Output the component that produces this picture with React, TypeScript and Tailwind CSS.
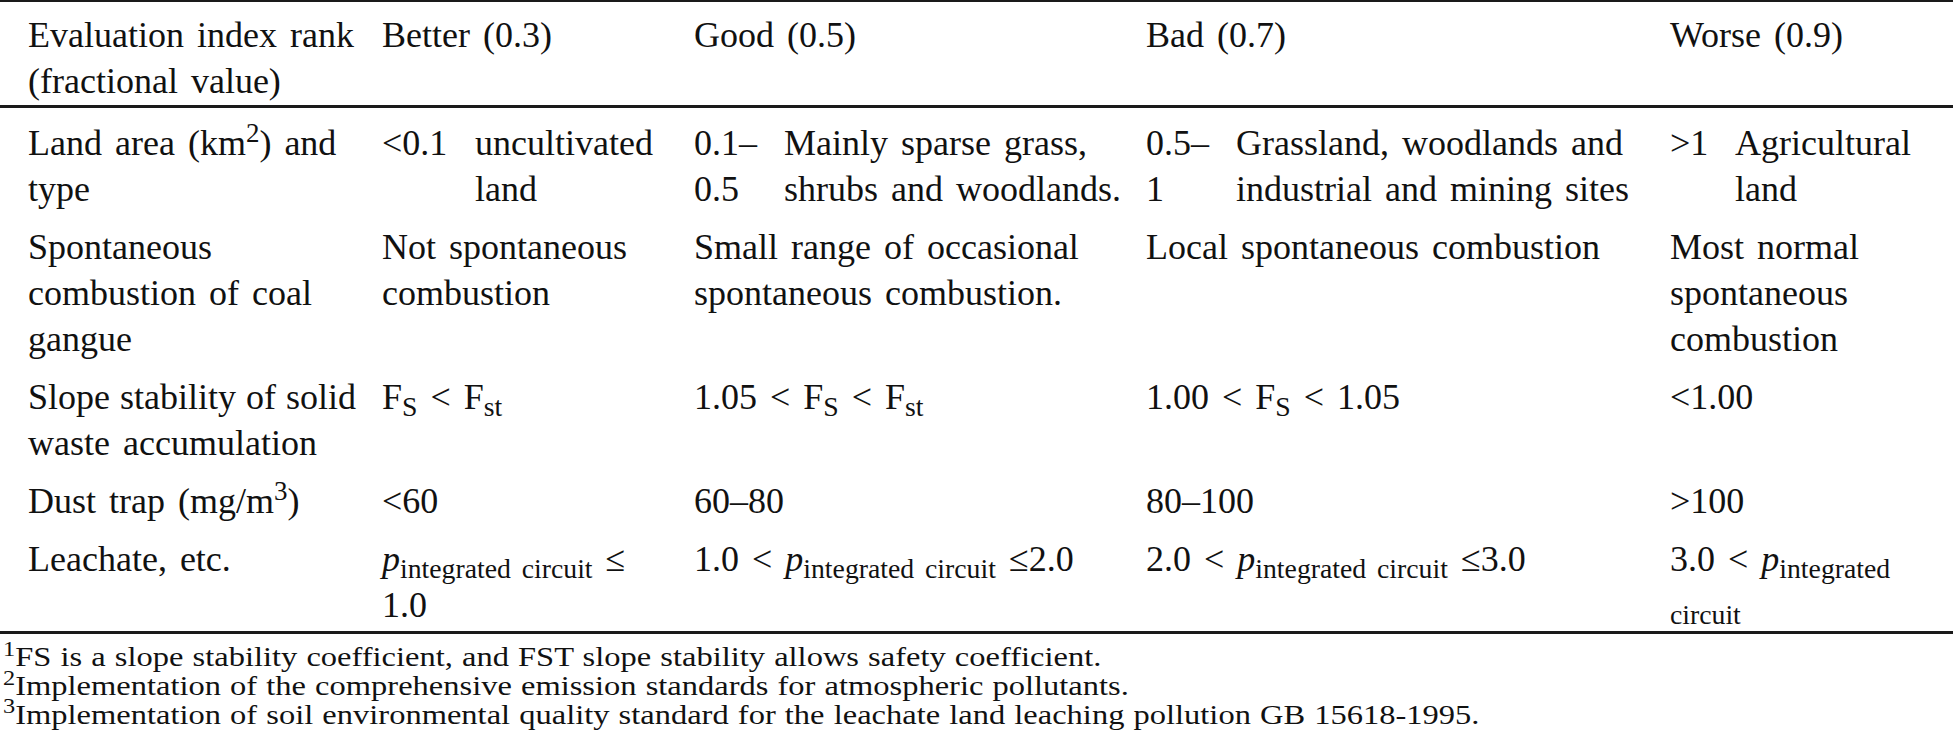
import type { ReactNode } from 'react'

const Sub = ({ children }: { children: ReactNode }) => <sub className="text-[0.77em]">{children}</sub>
const P = () => <i>p</i>

const Pair = ({ num, text, w }: { num: ReactNode, text: ReactNode, w: string }) => (
  <div className="flex">
    <span className={`${w} shrink-0`}>{num}</span>
    <span>{text}</span>
  </div>
)

const rows: ReactNode[][] = [
  [
    <>Land area (km<sup>2</sup>) and<br />type</>,
    <Pair w="w-[93px]" num="<0.1" text={<>uncultivated<br />land</>} />,
    <Pair w="w-[90px]" num={<>0.1–<br />0.5</>} text={<>Mainly sparse grass,<br />shrubs and woodlands.</>} />,
    <Pair w="w-[90px]" num={<>0.5–<br />1</>} text={<>Grassland, woodlands and<br />industrial and mining sites</>} />,
    <Pair w="w-[65px]" num=">1" text={<>Agricultural<br />land</>} />
  ],
  [
    <>Spontaneous<br />combustion of coal<br />gangue</>,
    <>Not spontaneous<br />combustion</>,
    <>Small range of occasional<br />spontaneous combustion.</>,
    <>Local spontaneous combustion</>,
    <>Most normal<br />spontaneous<br />combustion</>
  ],
  [
    <><span className="[word-spacing:1px]">Slope stability of solid</span><br />waste accumulation</>,
    <>F<Sub>S</Sub> &lt; F<Sub>st</Sub></>,
    <>1.05 &lt; F<Sub>S</Sub> &lt; F<Sub>st</Sub></>,
    <>1.00 &lt; F<Sub>S</Sub> &lt; 1.05</>,
    <>&lt;1.00</>
  ],
  [
    <>Dust trap (mg/m<sup>3</sup>)</>,
    <>&lt;60</>,
    <>60–80</>,
    <>80–100</>,
    <>&gt;100</>
  ],
  [
    <>Leachate, etc.</>,
    <><P /><Sub>integrated circuit</Sub> ≤<br />1.0</>,
    <>1.0 &lt; <P /><Sub>integrated circuit</Sub> ≤2.0</>,
    <>2.0 &lt; <P /><Sub>integrated circuit</Sub> ≤3.0</>,
    <>3.0 &lt; <P /><Sub>integrated</Sub><br /><Sub>circuit</Sub></>
  ]
]

const grid = 'grid grid-cols-[382px_312px_452px_524px_1fr]'

export default function App () {
  return (
    <div className="w-[1953px] h-[746px] bg-white text-[#111] font-['Liberation_Serif',serif] overflow-hidden">
      <div className="border-t-2 border-[#1a1a1a]" />
      <div className={`${grid} text-[36px] leading-[46px] [word-spacing:4px] pt-[10px] pb-[1px] border-b-[3px] border-[#1a1a1a]`}>
        <div className="pl-[28px]">Evaluation index rank<br />(fractional value)</div>
        <div>Better (0.3)</div>
        <div>Good (0.5)</div>
        <div>Bad (0.7)</div>
        <div>Worse (0.9)</div>
      </div>
      <div className="text-[36px] leading-[46px] [word-spacing:4px] pb-[3px] border-b-[3px] border-[#1a1a1a]">
        {rows.map((cells, i) => (
          <div key={i} className={`${grid} pt-[12px] whitespace-nowrap`}>
            {cells.map((c, j) => (
              <div key={j} className={j === 0 ? 'pl-[28px]' : ''}>{c}</div>
            ))}
          </div>
        ))}
      </div>
      <div className="pt-[9px] pl-[3px]">
        <div className="text-[32.5px] leading-[32.8px] [word-spacing:1px] origin-top scale-y-[0.87] whitespace-nowrap">
          <div><sup>1</sup>FS is a slope stability coefficient, and FST slope stability allows safety coefficient.</div>
          <div><sup>2</sup>Implementation of the comprehensive emission standards for atmospheric pollutants.</div>
          <div><sup>3</sup>Implementation of soil environmental quality standard for the leachate land leaching pollution GB 15618-1995.</div>
        </div>
      </div>
    </div>
  )
}
